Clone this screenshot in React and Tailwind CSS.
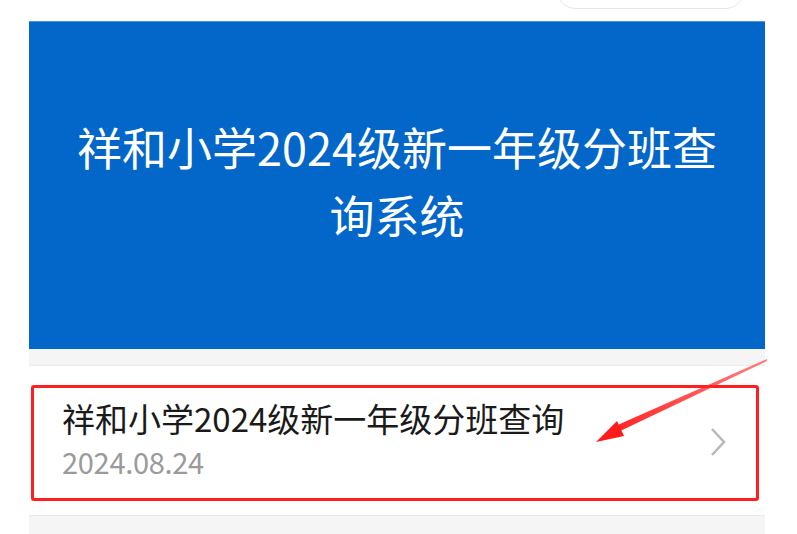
import React from 'react';

const font = { fontFamily: '"Noto Sans CJK SC", "Noto Sans", sans-serif' };

export default function App() {
  return (
    <div className="relative w-[797px] h-[534px] bg-white overflow-hidden" style={font}>
      {/* top bar with search pill peeking in */}
      <div className="h-[21px] flex justify-end pr-[52px]">
        <div className="w-[189px] h-[40px] -mt-[31px] rounded-full border border-[#e6e6e6] bg-white" />
      </div>

      <div className="ml-[29px] w-[736px]">
        <div className="h-[328px] bg-[#0366c9] border-t border-[#4f93d6] flex items-center justify-center px-[30px] pb-[10px]">
          <h1 className="text-white text-[45px] leading-[68px] text-center">
            祥和小学2024级新一年级分班查询系统
          </h1>
        </div>

        <div className="h-[17px] bg-[#f5f5f6] border-b border-[#ececec]" />

        <div className="h-[150px] bg-white border-b border-[#e8e8e8] flex items-center justify-between pl-[33px] pr-[38px]">
          <div className="flex flex-col -mt-[6px]">
            <div className="text-[33px] leading-[40px] text-[#1a1a1a]">祥和小学2024级新一年级分班查询</div>
            <div className="text-[29px] leading-[34px] mt-[6px] text-[#9a9a9a] tracking-[-0.3px]">2024.08.24</div>
          </div>
          <svg width="18" height="30" viewBox="0 0 18 30" className="mt-[2px]">
            <path d="M3 2 L15 15 L3 28" fill="none" stroke="#b8b8b8" strokeWidth="2.5" />
          </svg>
        </div>

        <div className="h-[30px] bg-[#f5f5f6]" />
      </div>

      {/* red annotation box */}
      <div className="absolute left-[31px] top-[385px] w-[728px] h-[116px] border-[3px] border-[#ff1f1f] rounded-[3px]" />

      {/* red arrow */}
      <svg className="absolute left-0 top-0" width="797" height="534" viewBox="0 0 797 534">
        <defs>
          <linearGradient id="g" x1="765" y1="360" x2="600" y2="440" gradientUnits="userSpaceOnUse">
            <stop offset="0" stopColor="#ff2a2a" stopOpacity="0.6" />
            <stop offset="1" stopColor="#ff1a1a" />
          </linearGradient>
        </defs>
        <polygon points="767,359 767,361 616,433 613,427" fill="url(#g)" />
        <polygon points="596,442 617,421 624,436" fill="#ff1a1a" />
      </svg>
    </div>
  );
}
